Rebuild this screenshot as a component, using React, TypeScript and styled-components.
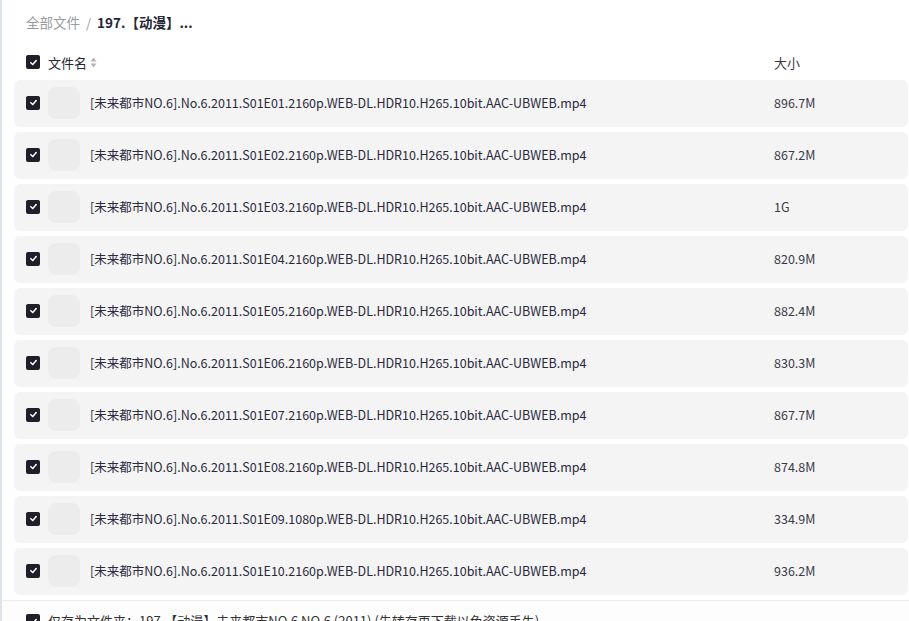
import styled, { createGlobalStyle } from "styled-components";

const GlobalStyle = createGlobalStyle`
  html, body {
    margin: 0;
    padding: 0;
    background: #fff;
  }
  body {
    font-family: "Noto Sans CJK SC", "Noto Sans", sans-serif;
    color: #262636;
  }
`;

type FileItem = {
  name: string;
  size: string;
};

const files: FileItem[] = [
  { name: "[未来都市NO.6].No.6.2011.S01E01.2160p.WEB-DL.HDR10.H265.10bit.AAC-UBWEB.mp4", size: "896.7M" },
  { name: "[未来都市NO.6].No.6.2011.S01E02.2160p.WEB-DL.HDR10.H265.10bit.AAC-UBWEB.mp4", size: "867.2M" },
  { name: "[未来都市NO.6].No.6.2011.S01E03.2160p.WEB-DL.HDR10.H265.10bit.AAC-UBWEB.mp4", size: "1G" },
  { name: "[未来都市NO.6].No.6.2011.S01E04.2160p.WEB-DL.HDR10.H265.10bit.AAC-UBWEB.mp4", size: "820.9M" },
  { name: "[未来都市NO.6].No.6.2011.S01E05.2160p.WEB-DL.HDR10.H265.10bit.AAC-UBWEB.mp4", size: "882.4M" },
  { name: "[未来都市NO.6].No.6.2011.S01E06.2160p.WEB-DL.HDR10.H265.10bit.AAC-UBWEB.mp4", size: "830.3M" },
  { name: "[未来都市NO.6].No.6.2011.S01E07.2160p.WEB-DL.HDR10.H265.10bit.AAC-UBWEB.mp4", size: "867.7M" },
  { name: "[未来都市NO.6].No.6.2011.S01E08.2160p.WEB-DL.HDR10.H265.10bit.AAC-UBWEB.mp4", size: "874.8M" },
  { name: "[未来都市NO.6].No.6.2011.S01E09.1080p.WEB-DL.HDR10.H265.10bit.AAC-UBWEB.mp4", size: "334.9M" },
  { name: "[未来都市NO.6].No.6.2011.S01E10.2160p.WEB-DL.HDR10.H265.10bit.AAC-UBWEB.mp4", size: "936.2M" },
];

const Page = styled.div`
  height: 621px;
  overflow: hidden;
  border-left: 2px solid #dfe4ec;
  box-sizing: border-box;
  padding: 0 1px 0 12px;
`;

const Breadcrumb = styled.div`
  display: flex;
  align-items: center;
  gap: 6px;
  height: 44px;
  padding-left: 12px;
  font-size: 13.5px;
`;

const Crumb = styled.span`
  color: #9a9aa4;
`;

const Sep = styled.span`
  color: #9a9aa4;
  font-size: 13px;
`;

const Current = styled.span`
  color: #262636;
  font-weight: 700;
`;

const HeaderRow = styled.div`
  display: flex;
  align-items: center;
  height: 36px;
  padding-left: 12px;
  font-size: 13px;
  color: #262636;
`;

const List = styled.div`
  display: flex;
  flex-direction: column;
  gap: 5px;
`;

const Row = styled.div`
  display: flex;
  align-items: center;
  height: 47px;
  padding-left: 12px;
  background: #f4f4f4;
  border-radius: 6px;
  font-size: 12.5px;
  line-height: 16px;
  padding-bottom: 2px;
  box-sizing: border-box;
`;

const NameCell = styled.div`
  flex: 1;
  display: flex;
  align-items: center;
  min-width: 0;
`;

const SizeCell = styled.div`
  width: 134px;
  color: #3a3a48;
`;

const HeaderTitle = styled.span`
  margin-left: 8px;
  display: flex;
  align-items: center;
  gap: 3px;
`;

const Thumb = styled.div`
  width: 32px;
  height: 32px;
  border-radius: 8px;
  background: #ececec;
  margin-left: 8px;
  flex-shrink: 0;
`;

const FileName = styled.span`
  margin-left: 10px;
  white-space: nowrap;
  color: #2a2a3c;
`;

const Box = styled.span`
  width: 14px;
  height: 14px;
  border-radius: 2px;
  background: #1f1f29;
  display: inline-flex;
  align-items: center;
  justify-content: center;
  flex-shrink: 0;
`;

const Footer = styled.div`
  margin: 5px -1px 0 -14px;
  border-top: 1px solid #ececec;
  background: #fdfdfd;
  display: flex;
  align-items: flex-start;
  padding: 13px 0 10px 26px;
  font-size: 13px;
  color: #333;
`;

const FooterText = styled.span`
  margin-left: 8px;
  white-space: nowrap;
  line-height: 14px;
`;

const Check = () => (
  <Box>
    <svg width="9" height="9" viewBox="0 0 10 10">
      <path d="M2 5.2 L4.2 7.3 L8 2.8" fill="none" stroke="#fff" strokeWidth="1.7" strokeLinecap="round" strokeLinejoin="round" />
    </svg>
  </Box>
);

const SortIcon = () => (
  <svg width="7" height="11" viewBox="0 0 7 11">
    <path d="M3.5 0.5 L6.5 4.5 H0.5 Z" fill="#b4b4b8" />
    <path d="M3.5 10.5 L6.5 6.5 H0.5 Z" fill="#b4b4b8" />
  </svg>
);

export default function App() {
  return (
    <>
      <GlobalStyle />
      <Page>
        <Breadcrumb>
          <Crumb>全部文件</Crumb>
          <Sep>/</Sep>
          <Current>197.【动漫】...</Current>
        </Breadcrumb>
        <HeaderRow>
          <NameCell>
            <Check />
            <HeaderTitle>
              文件名
              <SortIcon />
            </HeaderTitle>
          </NameCell>
          <SizeCell>大小</SizeCell>
        </HeaderRow>
        <List>
          {files.map((f) => (
            <Row key={f.name}>
              <NameCell>
                <Check />
                <Thumb />
                <FileName>{f.name}</FileName>
              </NameCell>
              <SizeCell>{f.size}</SizeCell>
            </Row>
          ))}
        </List>
        <Footer>
          <Check />
          <FooterText>仅存为文件夹：197.【动漫】未来都市NO.6 NO.6 (2011) (先转存再下载以免资源丢失) ...</FooterText>
        </Footer>
      </Page>
    </>
  );
}
